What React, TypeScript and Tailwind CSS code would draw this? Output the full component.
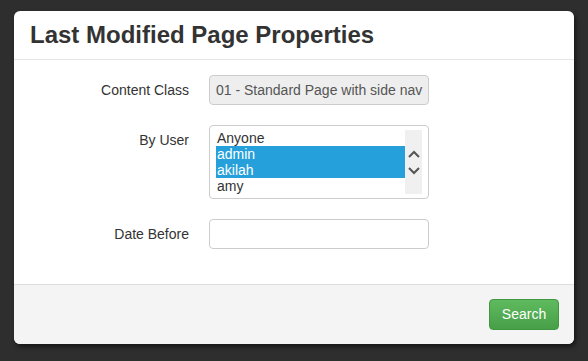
const users = ['Anyone', 'admin', 'akilah', 'amy'];
const selected = ['admin', 'akilah'];

function ChevronUp() {
  return (
    <svg width="12" height="8" viewBox="0 0 12 8" fill="none" stroke="#555" strokeWidth="2">
      <path d="M1 7 L6 2 L11 7" />
    </svg>
  );
}

function ChevronDown() {
  return (
    <svg width="12" height="8" viewBox="0 0 12 8" fill="none" stroke="#555" strokeWidth="2">
      <path d="M1 1 L6 6 L11 1" />
    </svg>
  );
}

export default function App() {
  return (
    <div
      className="h-[361px] w-[588px] bg-[#2e2e2e] pl-[14px] pt-[11px]"
      style={{ fontFamily: '"Liberation Sans", Arial, sans-serif' }}
    >
      <div className="w-[560px] overflow-hidden rounded-md bg-white shadow-[2px_3px_4px_rgba(0,0,0,0.5)]">
        <div className="h-[49px] border-b border-[#e5e5e5] pl-[16px] pt-[9px]">
          <h3 className="text-[24px] font-bold leading-[29px] text-[#333]">Last Modified Page Properties</h3>
        </div>

        <div className="flex flex-col gap-[20px] pb-[35px] pt-[15px] text-[14px] text-[#333]">
          <div className="flex items-center">
            <label className="w-[175px] text-right">Content Class</label>
            <div className="ml-[20px] flex h-[30px] w-[220px] items-center whitespace-nowrap rounded border border-[#ccc] bg-[#eee] px-[6px] text-[#555]">
              01 - Standard Page with side nav
            </div>
          </div>

          <div className="flex items-start">
            <label className="mt-[5px] w-[175px] text-right">By User</label>
            <div className="ml-[20px] flex h-[74px] w-[220px] rounded border border-[#ccc] bg-white py-[4px] pl-[6px] pr-[6px]">
              <div className="flex-1">
                {users.map((u) => (
                  <div
                    key={u}
                    className={
                      selected.includes(u)
                        ? 'h-[16px] bg-[#26a0da] pl-[1px] leading-[16px] text-white'
                        : 'h-[16px] pl-[1px] leading-[16px] text-[#333]'
                    }
                  >
                    {u}
                  </div>
                ))}
              </div>
              <div className="flex w-[17px] flex-col items-center justify-center gap-[9px] bg-[#f0f0f0]">
                <ChevronUp />
                <ChevronDown />
              </div>
            </div>
          </div>

          <div className="flex items-center">
            <label className="w-[175px] text-right">Date Before</label>
            <input className="ml-[20px] h-[30px] w-[220px] rounded border border-[#ccc] bg-white px-[7px] outline-none" />
          </div>
        </div>

        <div className="flex h-[60px] items-center justify-end border-t border-[#ddd] bg-[#f4f4f4] pr-[15px]">
          <button className="h-[31px] w-[70px] rounded border border-[#419641] bg-gradient-to-b from-[#5fba5f] to-[#479f47] text-[14px] text-white">
            Search
          </button>
        </div>
      </div>
    </div>
  );
}
